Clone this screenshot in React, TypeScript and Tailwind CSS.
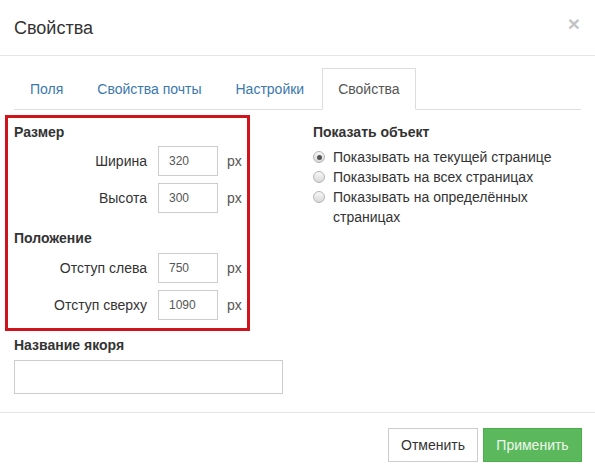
import React from "react";

const font = { fontFamily: '"Liberation Sans", Arial, sans-serif' };

function Radio({ checked }: { checked?: boolean }) {
  return (
    <span className="mt-[4px] flex h-[12px] w-[12px] shrink-0 items-center justify-center rounded-full border border-[#b5b5b5] bg-gradient-to-b from-[#f7f7f7] to-[#d9d9d9]">
      {checked && <span className="h-[5px] w-[5px] rounded-full bg-[#555]" />}
    </span>
  );
}

function Row({ label, value, mt }: { label: string; value: string; mt: string }) {
  return (
    <div className={`flex items-center ${mt}`}>
      <div className="w-[133px] pr-0 text-right text-[14px] text-[#333]">{label}</div>
      <div className="ml-[11px] flex h-[30px] w-[60px] items-center border border-[#ccc] px-[10px] text-[12px] text-[#555]">
        {value}
      </div>
      <div className="ml-[9px] text-[14px] text-[#555]">px</div>
    </div>
  );
}

export default function App() {
  const tabs = ["Поля", "Свойства почты", "Настройки", "Свойства"];
  return (
    <div className="h-[474px] w-[595px] overflow-hidden bg-white text-[14px] leading-[20px] text-[#333]" style={font}>
      {/* header */}
      <div className="flex h-[56px] items-center justify-between border-b border-[#e5e5e5] pl-[14px] pr-[15px]">
        <div className="text-[18px] leading-[26px] text-[#333]">Свойства</div>
        <div className="-mt-[8px] text-[21px] font-bold leading-[21px] text-[#c4c4c4]">×</div>
      </div>

      {/* body */}
      <div className="pt-[12px]">
        <div className="mx-[14px] flex border-b border-[#ddd]">
          {tabs.map((t, i) => (
            <div
              key={t}
              className={
                i === 3
                  ? "-mb-px mr-[2px] border border-[#ddd] border-b-white bg-white px-[15px] py-[10px] text-[#555]"
                  : "-mb-px mr-[2px] border border-transparent px-[15px] py-[10px] text-[#3a78ad]"
              }
            >
              {t}
            </div>
          ))}
        </div>

        <div className="flex">
          <div>
            <div className="ml-[5px] mt-[5px] w-[245px] border-[3px] border-[#d0141c] pb-[8px] pl-[6px] pt-[4px]">
              <div className="font-bold">Размер</div>
              <Row label="Ширина" value="320" mt="mt-[4px]" />
              <Row label="Высота" value="300" mt="mt-[7px]" />
              <div className="mt-[15px] font-bold">Положение</div>
              <Row label="Отступ слева" value="750" mt="mt-[5px]" />
              <Row label="Отступ сверху" value="1090" mt="mt-[7px]" />
            </div>
            <div className="ml-[14px] mt-[4px] font-bold">Название якоря</div>
            <div className="ml-[14px] mt-[5px] h-[34px] w-[269px] border border-[#ccc]" />
          </div>

          <div className="ml-[30px] mt-[12px] w-[268px]">
            <div className="font-bold">Показать объект</div>
            <div className="mt-[5px] flex flex-col">
              <div className="flex gap-[8px]">
                <Radio checked />
                <span>Показывать на текущей странице</span>
              </div>
              <div className="flex gap-[8px]">
                <Radio />
                <span>Показывать на всех страницах</span>
              </div>
              <div className="flex gap-[8px]">
                <Radio />
                <span>Показывать на определённых страницах</span>
              </div>
            </div>
          </div>
        </div>
      </div>

      {/* footer */}
      <div className="mt-[18px] flex justify-end gap-[5px] border-t border-[#e5e5e5] pr-[13px] pt-[15px]">
        <div className="flex h-[34px] w-[90px] items-center justify-center border border-[#ccc] bg-white text-[#333]">
          Отменить
        </div>
        <div className="flex h-[34px] w-[99px] items-center justify-center border border-[#4cae4c] bg-[#5cb85c] text-[#eef8ee]">
          Применить
        </div>
      </div>
    </div>
  );
}
